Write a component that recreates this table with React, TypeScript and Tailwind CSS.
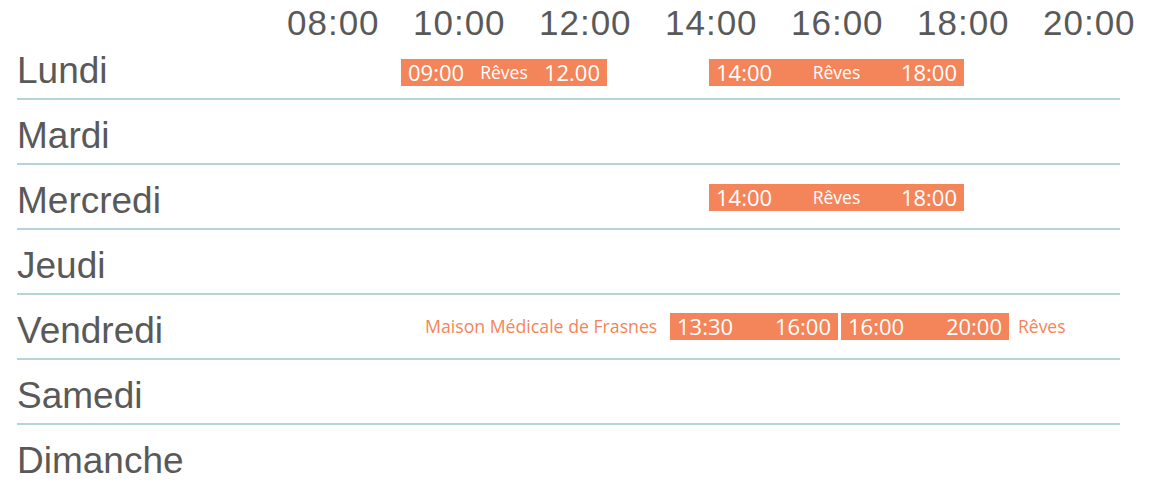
const hours = ["08:00", "10:00", "12:00", "14:00", "16:00", "18:00", "20:00"];

type Slot = { left: number; width: number; start: string; label: string; end: string };

type Day = {
  name: string;
  top?: number;
  slots?: Slot[];
  before?: string;
  after?: string;
};

const days: Day[] = [
  {
    name: "Lundi",
    top: 24,
    slots: [
      { left: 0, width: 206, start: "09:00", label: "Rêves", end: "12.00" },
      { left: 102, width: 255, start: "14:00", label: "Rêves", end: "18:00" },
    ],
  },
  { name: "Mardi" },
  {
    name: "Mercredi",
    top: 19,
    slots: [{ left: 308, width: 255, start: "14:00", label: "Rêves", end: "18:00" }],
  },
  { name: "Jeudi" },
  {
    name: "Vendredi",
    top: 18,
    before: "Maison Médicale de Frasnes",
    after: "Rêves",
    slots: [
      { left: 0, width: 168, start: "13:30", label: "", end: "16:00" },
      { left: 3, width: 168, start: "16:00", label: "", end: "20:00" },
    ],
  },
  { name: "Samedi" },
  { name: "Dimanche" },
];

function Block({ slot }: { slot: Slot }) {
  return (
    <div
      className="h-[27px] shrink-0 bg-[#f4855a] text-white flex items-center justify-between px-[7px] leading-[27px] font-['Open_Sans',sans-serif]"
      style={{ marginLeft: slot.left, width: slot.width }}
    >
      <span className="text-[22px]">{slot.start}</span>
      {slot.label && <span className="text-[17.5px]">{slot.label}</span>}
      <span className="text-[22px]">{slot.end}</span>
    </div>
  );
}

export default function App() {
  return (
    <div className="w-[1157px] h-[484px] overflow-hidden bg-white pl-[17px] font-['Liberation_Sans',Arial,sans-serif] text-[#595959]">
      <div className="h-[35px] flex pl-[270px]">
        {hours.map((h, i) => (
          <div
            key={h}
            className={`${i < hours.length - 1 ? "w-[126px]" : ""} shrink-0 mt-[5px] text-[35px] leading-[36px] tracking-[1px]`}
          >
            {h}
          </div>
        ))}
      </div>

      <div className="w-[1103px]">
        {days.map((d, i) => (
          <div
            key={d.name}
            className={`h-[65px] flex items-start ${i < days.length - 1 ? "border-b-2 border-[#b5d3da]" : ""}`}
          >
            <div className="w-[384px] shrink-0 pt-[17px] text-[37px] leading-[37px]">{d.name}</div>
            {d.slots && (
              <div className="flex items-start" style={{ paddingTop: d.top }}>
                {d.before && (
                  <span className="w-[269px] shrink-0 pl-[24px] text-[17.7px] leading-[27px] text-[#f4855a] whitespace-nowrap font-['Open_Sans',sans-serif]">
                    {d.before}
                  </span>
                )}
                {d.slots.map((s, j) => (
                  <Block key={j} slot={s} />
                ))}
                {d.after && (
                  <span className="ml-[9px] text-[17.5px] leading-[27px] text-[#f4855a] font-['Open_Sans',sans-serif]">
                    {d.after}
                  </span>
                )}
              </div>
            )}
          </div>
        ))}
      </div>
    </div>
  );
}
